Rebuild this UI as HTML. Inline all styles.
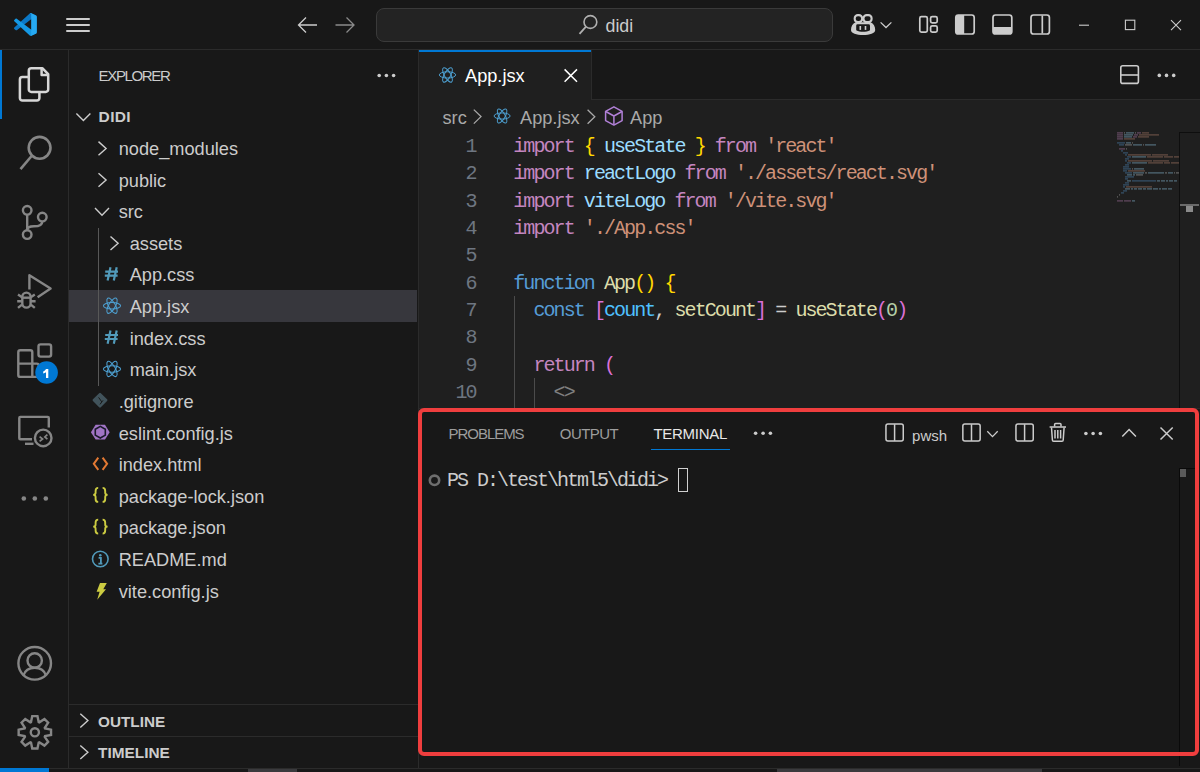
<!DOCTYPE html>
<html><head><meta charset="utf-8">
<style>
*{margin:0;padding:0;box-sizing:border-box}
html,body{width:1200px;height:772px;overflow:hidden;background:#181818}
body{position:relative;font-family:"Liberation Sans",sans-serif;color:#cccccc}
.a{position:absolute}
.t{position:absolute;white-space:pre;line-height:1}
.m{font-family:"Liberation Mono",monospace;-webkit-text-stroke:0}
svg{position:absolute;overflow:visible}
</style></head><body>

<div class="a" style="left:0;top:0;width:1200px;height:49px;background:#181818"></div>
<div class="a" style="left:0;top:49px;width:1200px;height:1px;background:#2b2b2b"></div>
<div class="a" style="left:68px;top:50px;width:1px;height:718px;background:#2b2b2b"></div>
<div class="a" style="left:0;top:50px;width:2px;height:69px;background:#0078d4"></div>
<div class="a" style="left:418px;top:50px;width:1px;height:718px;background:#2b2b2b"></div>
<div class="a" style="left:419px;top:100px;width:781px;height:308px;background:#1f1f1f"></div>
<div class="a" style="left:591px;top:99px;width:609px;height:1px;background:#2b2b2b"></div>
<div class="a" style="left:419px;top:50px;width:172px;height:50px;background:#1f1f1f"></div>
<div class="a" style="left:419px;top:50px;width:172px;height:2px;background:#0078d4"></div>
<div class="a" style="left:591px;top:50px;width:1px;height:49px;background:#2b2b2b"></div>
<svg style="left:13.9px;top:13px" width="22.9" height="22.9" viewBox="0 0 100 100">
<path fill="#0b78c6" d="M96.4614 10.7962L75.8569 0.875542C73.4719 -0.272773 70.6217 0.211611 68.75 2.08333L1.29858 63.5832C-0.515693 65.2373 -0.513607 68.0937 1.30308 69.7452L6.81272 74.754C8.29793 76.1042 10.5347 76.2036 12.1338 74.9905L93.3609 13.3699C96.086 11.3026 100 13.2462 100 16.6667V16.4275C100 14.0265 98.6246 11.8378 96.4614 10.7962Z"/>
<path fill="#1598e4" d="M96.4614 89.2038L75.8569 99.1245C73.4719 100.273 70.6217 99.7884 68.75 97.9167L1.29858 36.4169C-0.515693 34.7627 -0.513607 31.9063 1.30308 30.2548L6.81272 25.246C8.29793 23.8958 10.5347 23.7964 12.1338 25.0095L93.3609 86.6301C96.086 88.6974 100 86.7538 100 83.3334V83.5726C100 85.9735 98.6246 88.1622 96.4614 89.2038Z"/>
<path fill="#26a9f2" d="M75.8578 99.1263C73.4721 100.274 70.6219 99.7885 68.75 97.9166C71.0564 100.223 75 98.5895 75 95.3278V4.67213C75 1.41039 71.0564 -0.223106 68.75 2.08329C70.6219 0.211402 73.4721 -0.273666 75.8578 0.873633L96.4587 10.7807C98.6234 11.8217 100 14.0112 100 16.4132V83.5871C100 85.9893 98.6234 88.1788 96.4586 89.2198L75.8578 99.1263Z"/>
</svg>
<div class="a" style="left:66px;top:18.4px;width:24px;height:2px;background:#cccccc;border-radius:1px"></div>
<div class="a" style="left:66px;top:24.2px;width:24px;height:2px;background:#cccccc;border-radius:1px"></div>
<div class="a" style="left:66px;top:30.0px;width:24px;height:2px;background:#cccccc;border-radius:1px"></div>
<svg style="left:0;top:0" width="1" height="1"><path d="M298.5 25 H317 M306 17.5 L298.5 25 L306 32.5" fill="none" stroke="#cccccc" stroke-width="1.3"/><path d="M335.5 25 H354 M346.5 17.5 L354 25 L346.5 32.5" fill="none" stroke="#8a8a8a" stroke-width="1.3"/></svg>
<div class="a" style="left:375.5px;top:8px;width:457px;height:34px;background:#232323;border:1px solid #3a3a3a;border-radius:8px"></div>
<svg style="left:0;top:0" width="1" height="1"><circle cx="590.4" cy="22" r="6.4" fill="none" stroke="#b0b0b0" stroke-width="1.6"/><path d="M586 26.6 L579.5 33.8" stroke="#b0b0b0" stroke-width="1.8" fill="none"/></svg>
<div class="t" style="left:605.50px;top:17.73px;font-size:17.8px;color:#cccccc;">didi</div>
<svg style="left:0;top:0" width="1" height="1">
<g fill="none" stroke="#cccccc" stroke-width="2.1"><rect x="854.7" y="15.1" width="7.4" height="7" rx="3.2"/><rect x="863.5" y="15.1" width="8.1" height="7" rx="3.2"/></g>
<path fill-rule="evenodd" fill="#cccccc" d="M851 30 C851 26.5 852.6 23.4 855.6 22.3 H870.6 C873.6 23.4 875.2 26.5 875.2 30 C875.2 33.2 869.8 35 863.1 35 C856.4 35 851 33.2 851 30 Z M857.6 24.3 H868.6 a1.4 1.4 0 0 1 1.4 1.4 V30.2 C868 31.4 865.6 31.8 863.1 31.8 C860.6 31.8 858.2 31.4 856.2 30.2 V25.7 a1.4 1.4 0 0 1 1.4 -1.4 Z"/>
<rect x="859.5" y="26" width="1.6" height="3.9" fill="#cccccc"/><rect x="864.7" y="26" width="1.6" height="3.9" fill="#cccccc"/>
<path d="M880.6 22.4 L886 27.5 L891.4 22.4" fill="none" stroke="#cccccc" stroke-width="1.3"/></svg>
<svg style="left:0;top:0" width="1" height="1"><g fill="none" stroke="#cccccc" stroke-width="1.7">
<rect x="919.8" y="16.7" width="7.5" height="15.4" rx="1.6"/>
<rect x="930.6" y="16.7" width="6.6" height="6.2" rx="1.6"/>
<rect x="930.6" y="25.9" width="6.6" height="6.2" rx="1.6"/>
<rect x="955.8" y="15" width="18.4" height="19" rx="2.5"/>
<rect x="993" y="15" width="18.8" height="19" rx="2.5"/>
<rect x="1031" y="15" width="18.4" height="19" rx="2.5"/>
<path d="M1042.3 15.5 V33.5"/>
</g><g fill="#cccccc"><path d="M955.8 17.5 a2.5 2.5 0 0 1 2.5 -2.5 H964.2 V34 H958.3 a2.5 2.5 0 0 1 -2.5 -2.5 Z"/>
<path d="M993 27 H1011.8 V31.5 a2.5 2.5 0 0 1 -2.5 2.5 H995.5 a2.5 2.5 0 0 1 -2.5 -2.5 Z"/></g>
<path d="M1079 25.2 H1089" stroke="#cccccc" stroke-width="1.1"/>
<rect x="1125.4" y="20.2" width="9.4" height="9.4" fill="none" stroke="#cccccc" stroke-width="1.1"/>
<path d="M1171 20.1 L1181 30.1 M1181 20.1 L1171 30.1" stroke="#cccccc" stroke-width="1.1"/>
</svg>
<svg style="left:0;top:0" width="1" height="1">
<g fill="none" stroke="#d7d7d7" stroke-width="2.5" stroke-linejoin="round">
<path d="M28.8 76.9 H22.4 a2.5 2.5 0 0 0 -2.5 2.5 V98.1 a2.5 2.5 0 0 0 2.5 2.5 H36.9 a2.5 2.5 0 0 0 2.5 -2.5 V91.9"/>
<path d="M31.3 68.2 H42.3 L48.2 74.1 V89.4 a2.5 2.5 0 0 1 -2.5 2.5 H31.3 a2.5 2.5 0 0 1 -2.5 -2.5 V70.7 a2.5 2.5 0 0 1 2.5 -2.5 Z"/>
<path d="M41.6 68.5 V75 H48"/>
</g>
<g fill="none" stroke="#868686" stroke-width="2.6">
<circle cx="39.6" cy="147.8" r="10.9"/>
<path d="M31.6 156 L20.5 169.2"/>
</g>
<g fill="none" stroke="#868686" stroke-width="2.4">
<circle cx="27.2" cy="210.3" r="4.3"/>
<circle cx="27.2" cy="234.6" r="4.3"/>
<circle cx="42.3" cy="217.1" r="4.3"/>
<path d="M27.2 214.6 V230.3"/>
<path d="M42.3 221.4 C42.3 225.5 38 226.2 34 226.2 C30 226.2 27.2 227 27.2 230"/>
</g>
<g fill="none" stroke="#868686" stroke-width="2.4" stroke-linejoin="round">
<path d="M29.4 289.5 V275.2 L50.6 288.6 L37.6 297.2"/>
<rect x="22.3" y="292.6" width="8.3" height="15" rx="4.15"/>
<path d="M22.3 297.7 H30.6"/>
<path d="M18 294.6 L22 297.3 M34.8 294.6 L30.8 297.3 M17.2 301.2 H22 M35.6 301.2 H30.8 M18 307.9 L22 304.6 M34.8 307.9 L30.8 304.6"/>
</g>
<g fill="none" stroke="#868686" stroke-width="2.4" stroke-linejoin="round">
<path d="M20.3 350.3 H30.3 a2 2 0 0 1 2 2 V363.6 H36.8 a2 2 0 0 1 2 2 V376.9 H20.3 a2 2 0 0 1 -2 -2 V352.3 a2 2 0 0 1 2 -2 Z M18.3 363.6 H32.3 V376.9"/>
<rect x="38.5" y="344.4" width="12.6" height="12.2" rx="2"/>
</g>
<circle cx="46.6" cy="372.5" r="11.3" fill="#0078d4"/>
<g fill="none" stroke="#868686" stroke-width="2.4">
<path d="M32 439.3 H20.3 a1 1 0 0 1 -1 -1 V417.9 a1 1 0 0 1 1 -1 H47.8 a1 1 0 0 1 1 1 V427.5"/>
<path d="M25 443.8 H33.5"/>
<circle cx="43.2" cy="437.9" r="8.3"/>
<path d="M39.6 436.6 L42.6 439 L39.6 441.4 M47.4 434.6 L44.8 436.9 L47.4 439.2" stroke-width="1.7"/>
</g>
<g fill="#868686"><circle cx="23.8" cy="498.5" r="2.3"/><circle cx="34.8" cy="498.5" r="2.3"/><circle cx="45.8" cy="498.5" r="2.3"/></g>
<g fill="none" stroke="#868686" stroke-width="2.4">
<circle cx="34.7" cy="663.3" r="16.3"/>
<circle cx="34.7" cy="660.5" r="7.2"/>
<path d="M23.5 675.5 C25 670.5 29 667.8 34.7 667.8 C40.4 667.8 44.4 670.5 45.9 675.5"/>
</g>
</svg>
<svg style="left:0;top:0" width="1" height="1"><path d="M46 369.1 H48.3 V378 H46 V372.3 C45.2 372.9 44.3 373.3 43.2 373.5 V371.6 C44.5 371.2 45.4 370.3 46 369.1 Z" fill="#ffffff"/></svg>
<svg style="left:0;top:0" width="1" height="1"><polygon points="31.01,722.10 32.24,716.11 37.46,716.11 38.69,722.10 39.35,722.37 44.45,719.00 48.15,722.70 44.78,727.80 45.05,728.46 51.04,729.69 51.04,734.91 45.05,736.14 44.78,736.80 48.15,741.90 44.45,745.60 39.35,742.23 38.69,742.50 37.46,748.49 32.24,748.49 31.01,742.50 30.35,742.23 25.25,745.60 21.55,741.90 24.92,736.80 24.65,736.14 18.66,734.91 18.66,729.69 24.65,728.46 24.92,727.80 21.55,722.70 25.25,719.00 30.35,722.37" fill="none" stroke="#868686" stroke-width="2.4" stroke-linejoin="miter"/><circle cx="34.85" cy="732.3" r="4.1" fill="none" stroke="#868686" stroke-width="2.4"/></svg>
<div class="t" style="left:98.60px;top:68.30px;font-size:15px;color:#cccccc;letter-spacing:-1.35px;">EXPLORER</div>
<svg style="left:0;top:0" width="1" height="1"><g fill="#cccccc"><circle cx="379.2" cy="75.5" r="1.8"/><circle cx="386.4" cy="75.5" r="1.8"/><circle cx="393.6" cy="75.5" r="1.8"/></g></svg>
<div class="a" style="left:69px;top:290px;width:348px;height:32px;background:#37373d"></div>
<div class="a" style="left:98px;top:227.5px;width:1px;height:158.1px;background:#585858"></div>
<div class="t" style="left:98.60px;top:109.28px;font-size:15.5px;color:#cccccc;font-weight:bold;letter-spacing:0.35px;">DIDI</div>
<div class="t" style="left:118.70px;top:140.01px;font-size:18.2px;color:#cccccc;">node_modules</div>
<div class="t" style="left:118.70px;top:171.63px;font-size:18.2px;color:#cccccc;">public</div>
<div class="t" style="left:118.70px;top:203.25px;font-size:18.2px;color:#cccccc;">src</div>
<div class="t" style="left:129.70px;top:234.87px;font-size:18.2px;color:#cccccc;">assets</div>
<div class="t" style="left:129.70px;top:266.49px;font-size:18.2px;color:#cccccc;">App.css</div>
<div class="t" style="left:129.70px;top:298.11px;font-size:18.2px;color:#cccccc;">App.jsx</div>
<div class="t" style="left:129.70px;top:329.73px;font-size:18.2px;color:#cccccc;">index.css</div>
<div class="t" style="left:129.70px;top:361.35px;font-size:18.2px;color:#cccccc;">main.jsx</div>
<div class="t" style="left:118.70px;top:392.97px;font-size:18.2px;color:#cccccc;">.gitignore</div>
<div class="t" style="left:118.70px;top:424.59px;font-size:18.2px;color:#cccccc;">eslint.config.js</div>
<div class="t" style="left:118.70px;top:456.21px;font-size:18.2px;color:#cccccc;">index.html</div>
<div class="t" style="left:118.70px;top:487.83px;font-size:18.2px;color:#cccccc;">package-lock.json</div>
<div class="t" style="left:118.70px;top:519.45px;font-size:18.2px;color:#cccccc;">package.json</div>
<div class="t" style="left:118.70px;top:551.07px;font-size:18.2px;color:#cccccc;">README.md</div>
<div class="t" style="left:118.70px;top:582.69px;font-size:18.2px;color:#cccccc;">vite.config.js</div>
<svg style="left:0;top:0" width="1" height="1"><path d="M76.4 113.6 L83.4 120.6 L90.4 113.6" fill="none" stroke="#cccccc" stroke-width="1.4"/><path d="M98.5 141.63 L106.1 148.43 L98.5 155.23000000000002" fill="none" stroke="#cccccc" stroke-width="1.4"/><path d="M98.5 173.25 L106.1 180.05 L98.5 186.85000000000002" fill="none" stroke="#cccccc" stroke-width="1.4"/><path d="M95 208.07000000000002 L102 215.27 L109 208.07000000000002" fill="none" stroke="#cccccc" stroke-width="1.4"/><path d="M110.5 236.49 L118.1 243.29000000000002 L110.5 250.09000000000003" fill="none" stroke="#cccccc" stroke-width="1.4"/><path d="M110.5 267.3 L107.6 280.4 M116.7 267.3 L113.8 280.4 M105.2 271.7 H118 M104.8 275.7 H117.6" fill="none" stroke="#519aba" stroke-width="2.2"/><g fill="none" stroke="#4d9fd0" stroke-width="1.05" transform="translate(112 305.73)"><ellipse rx="8.60" ry="3.30" transform="rotate(0)"/><ellipse rx="8.60" ry="3.30" transform="rotate(60)"/><ellipse rx="8.60" ry="3.30" transform="rotate(120)"/></g><path d="M110.5 330.6 L107.6 343.7 M116.7 330.6 L113.8 343.7 M105.2 335.0 H118 M104.8 339.0 H117.6" fill="none" stroke="#519aba" stroke-width="2.2"/><g fill="none" stroke="#4d9fd0" stroke-width="1.05" transform="translate(112 368.97)"><ellipse rx="8.60" ry="3.30" transform="rotate(0)"/><ellipse rx="8.60" ry="3.30" transform="rotate(60)"/><ellipse rx="8.60" ry="3.30" transform="rotate(120)"/></g><g transform="translate(100 400.2) rotate(45)"><rect x="-5.6" y="-5.6" width="11.2" height="11.2" rx="1.2" fill="#41535b"/></g><path d="M98.6 397.4 L101.8 401.9 L100 404.4 M101.8 401.9 L103 400.4" stroke="#181818" stroke-width="1" fill="none"/><polygon points="109.70,432.21 105.00,439.57 95.60,439.57 90.90,432.21 95.60,424.85 105.00,424.85" fill="#a074c4"/><polygon points="105.32,435.11 100.30,438.01 95.28,435.11 95.28,429.31 100.30,426.41 105.32,429.31" fill="#a074c4" stroke="#1a1a2a" stroke-width="1.6"/><path d="M98.3 457.7 L93.8 463.8 L98.3 469.9 M102.6 457.7 L107.1 463.8 L102.6 469.9" fill="none" stroke="#e37933" stroke-width="2"/><path d="M98.2 487.9 C96 487.9 95.6 488.9 95.6 490.9 V492.8 C95.6 494.1 94.8 494.9 93.2 494.9 C94.8 494.9 95.6 495.8 95.6 497.1 V498.9 C95.6 500.9 96 501.9 98.2 501.9 M102.6 487.9 C104.8 487.9 105.2 488.9 105.2 490.9 V492.8 C105.2 494.1 106 494.9 107.6 494.9 C106 494.9 105.2 495.8 105.2 497.1 V498.9 C105.2 500.9 104.8 501.9 102.6 501.9" fill="none" stroke="#cbcb41" stroke-width="1.9"/><path d="M98.2 519.6 C96 519.6 95.6 520.6 95.6 522.6 V524.4 C95.6 525.8 94.8 526.6 93.2 526.6 C94.8 526.6 95.6 527.4 95.6 528.8 V530.6 C95.6 532.6 96 533.6 98.2 533.6 M102.6 519.6 C104.8 519.6 105.2 520.6 105.2 522.6 V524.4 C105.2 525.8 106 526.6 107.6 526.6 C106 526.6 105.2 527.4 105.2 528.8 V530.6 C105.2 532.6 104.8 533.6 102.6 533.6" fill="none" stroke="#cbcb41" stroke-width="1.9"/><circle cx="100.3" cy="559.0" r="7.8" fill="none" stroke="#519aba" stroke-width="1.6"/><circle cx="100.3" cy="555.2" r="1.3" fill="#519aba"/><path d="M98.6 557.9 H100.9 V563.3 M98.4 563.6 H102.4" stroke="#519aba" stroke-width="1.8" fill="none"/><path d="M100 582.9 L106.8 582.9 L103.3 589.3 L106 589.3 L97.2 599.8 L99.6 591.7 L96.6 591.7 Z" fill="#cbcb41"/></svg>
<div class="a" style="left:69px;top:704px;width:349px;height:1px;background:#2b2b2b"></div>
<div class="a" style="left:69px;top:736px;width:349px;height:1px;background:#2b2b2b"></div>
<div class="a" style="left:0;top:768px;width:1200px;height:1px;background:#2b2b2b"></div>
<svg style="left:0;top:0" width="1" height="1"><path d="M80.3 713.8000000000001 L87.89999999999999 720.6 L80.3 727.4" fill="none" stroke="#cccccc" stroke-width="1.4"/><path d="M80.3 745.5 L87.89999999999999 752.3 L80.3 759.0999999999999" fill="none" stroke="#cccccc" stroke-width="1.4"/></svg>
<div class="t" style="left:98.00px;top:714.05px;font-size:15.3px;color:#cccccc;font-weight:bold;">OUTLINE</div>
<div class="t" style="left:98.00px;top:744.86px;font-size:15.4px;color:#cccccc;font-weight:bold;">TIMELINE</div>
<div class="a" style="left:0;top:769px;width:1200px;height:3px;background:#181818"></div>
<div class="a" style="left:0;top:768px;width:49px;height:4px;background:#0078d4"></div>
<div class="a" style="left:248px;top:769px;width:49px;height:3px;background:#3a3a3d"></div>
<div class="a" style="left:777px;top:769px;width:265px;height:3px;background:#3a3a3d"></div>
<div class="t" style="left:465.00px;top:67.19px;font-size:18.2px;color:#ffffff;">App.jsx</div>
<div class="t" style="left:442.50px;top:108.89px;font-size:18.2px;color:#a9a9a9;">src</div>
<div class="t" style="left:520.00px;top:109.09px;font-size:18.2px;color:#a9a9a9;">App.jsx</div>
<div class="t" style="left:630.00px;top:109.14px;font-size:18.2px;color:#a9a9a9;">App</div>
<svg style="left:0;top:0" width="1" height="1"><g fill="none" stroke="#4d9fd0" stroke-width="1.00" transform="translate(447.5 74.9)"><ellipse rx="8.17" ry="3.13" transform="rotate(0)"/><ellipse rx="8.17" ry="3.13" transform="rotate(60)"/><ellipse rx="8.17" ry="3.13" transform="rotate(120)"/></g><path d="M564.6 69.4 L577 81.8 M577 69.4 L564.6 81.8" stroke="#ffffff" stroke-width="1.5"/><path d="M473.8 109.6 L481 116.6 L473.8 123.6" fill="none" stroke="#a9a9a9" stroke-width="1.3"/><g fill="none" stroke="#4d9fd0" stroke-width="0.98" transform="translate(502.1 116)"><ellipse rx="8.00" ry="3.07" transform="rotate(0)"/><ellipse rx="8.00" ry="3.07" transform="rotate(60)"/><ellipse rx="8.00" ry="3.07" transform="rotate(120)"/></g><path d="M587.6 109.8 L594.8 116.8 L587.6 123.8" fill="none" stroke="#a9a9a9" stroke-width="1.3"/><g fill="none" stroke="#b180d7" stroke-width="1.5" stroke-linejoin="round"><path d="M613.9 106.8 L622.1 111.4 V120.6 L613.9 125.1 L605.6 120.6 V111.4 Z"/><path d="M605.8 111.5 L613.9 116 L622 111.5 M613.9 116 V124.8"/></g><g fill="none" stroke="#cccccc" stroke-width="1.6"><rect x="1120.8" y="65.8" width="17.6" height="17.6" rx="2"/><path d="M1121 75 H1138.2"/></g><g fill="#cccccc"><circle cx="1159.3" cy="75.4" r="1.8"/><circle cx="1166.5" cy="75.4" r="1.8"/><circle cx="1173.7" cy="75.4" r="1.8"/></g></svg>
<div class="t m" style="left:465.57px;top:136.98px;font-size:20px;letter-spacing:-1.93px;color:#6e7681">1</div>
<div class="t m" style="left:513.30px;top:136.98px;font-size:20px;letter-spacing:-1.93px;color:#cccccc"><span style="color:#c586c0">import</span><span style="color:#cccccc"> </span><span style="color:#ffd700">{</span><span style="color:#9cdcfe"> useState </span><span style="color:#ffd700">}</span><span style="color:#cccccc"> </span><span style="color:#c586c0">from</span><span style="color:#ce9178"> &#x27;react&#x27;</span></div>
<div class="t m" style="left:465.57px;top:164.31px;font-size:20px;letter-spacing:-1.93px;color:#6e7681">2</div>
<div class="t m" style="left:513.30px;top:164.31px;font-size:20px;letter-spacing:-1.93px;color:#cccccc"><span style="color:#c586c0">import</span><span style="color:#9cdcfe"> reactLogo </span><span style="color:#c586c0">from</span><span style="color:#ce9178"> &#x27;./assets/react.svg&#x27;</span></div>
<div class="t m" style="left:465.57px;top:191.64px;font-size:20px;letter-spacing:-1.93px;color:#6e7681">3</div>
<div class="t m" style="left:513.30px;top:191.64px;font-size:20px;letter-spacing:-1.93px;color:#cccccc"><span style="color:#c586c0">import</span><span style="color:#9cdcfe"> viteLogo </span><span style="color:#c586c0">from</span><span style="color:#ce9178"> &#x27;/vite.svg&#x27;</span></div>
<div class="t m" style="left:465.57px;top:218.97px;font-size:20px;letter-spacing:-1.93px;color:#6e7681">4</div>
<div class="t m" style="left:513.30px;top:218.97px;font-size:20px;letter-spacing:-1.93px;color:#cccccc"><span style="color:#c586c0">import</span><span style="color:#ce9178"> &#x27;./App.css&#x27;</span></div>
<div class="t m" style="left:465.57px;top:246.30px;font-size:20px;letter-spacing:-1.93px;color:#6e7681">5</div>
<div class="t m" style="left:465.57px;top:273.62px;font-size:20px;letter-spacing:-1.93px;color:#6e7681">6</div>
<div class="t m" style="left:513.30px;top:273.62px;font-size:20px;letter-spacing:-1.93px;color:#cccccc"><span style="color:#569cd6">function</span><span style="color:#cccccc"> </span><span style="color:#dcdcaa">App</span><span style="color:#ffd700">()</span><span style="color:#cccccc"> </span><span style="color:#ffd700">{</span></div>
<div class="t m" style="left:465.57px;top:300.95px;font-size:20px;letter-spacing:-1.93px;color:#6e7681">7</div>
<div class="t m" style="left:513.30px;top:300.95px;font-size:20px;letter-spacing:-1.93px;color:#cccccc"><span style="color:#cccccc">  </span><span style="color:#569cd6">const</span><span style="color:#cccccc"> </span><span style="color:#da70d6">[</span><span style="color:#4fc1ff">count</span><span style="color:#cccccc">, </span><span style="color:#dcdcaa">setCount</span><span style="color:#da70d6">]</span><span style="color:#cccccc"> = </span><span style="color:#dcdcaa">useState</span><span style="color:#da70d6">(</span><span style="color:#b5cea8">0</span><span style="color:#da70d6">)</span></div>
<div class="t m" style="left:465.57px;top:328.29px;font-size:20px;letter-spacing:-1.93px;color:#6e7681">8</div>
<div class="t m" style="left:465.57px;top:355.62px;font-size:20px;letter-spacing:-1.93px;color:#6e7681">9</div>
<div class="t m" style="left:513.30px;top:355.62px;font-size:20px;letter-spacing:-1.93px;color:#cccccc"><span style="color:#cccccc">  </span><span style="color:#c586c0">return</span><span style="color:#cccccc"> </span><span style="color:#da70d6">(</span></div>
<div class="t m" style="left:455.50px;top:382.94px;font-size:20px;letter-spacing:-1.93px;color:#6e7681">10</div>
<div class="t m" style="left:513.30px;top:382.94px;font-size:20px;letter-spacing:-1.93px;color:#cccccc"><span style="color:#cccccc">    </span><span style="color:#808080">&lt;&gt;</span></div>
<div class="a" style="left:514px;top:296.3px;width:1px;height:112px;background:#4b4b4b"></div>
<div class="a" style="left:534px;top:378.3px;width:1px;height:30px;background:#4b4b4b"></div>
<svg style="left:0;top:0" width="1" height="1"><g opacity="0.42"><rect x="1117.0" y="132.3" width="6.0" height="1.2" fill="#c586c0"/><rect x="1124.0" y="132.3" width="1.0" height="1.2" fill="#cccccc"/><rect x="1126.0" y="132.3" width="8.0" height="1.2" fill="#9cdcfe"/><rect x="1135.0" y="132.3" width="1.0" height="1.2" fill="#cccccc"/><rect x="1137.0" y="132.3" width="4.0" height="1.2" fill="#c586c0"/><rect x="1142.0" y="132.3" width="7.0" height="1.2" fill="#ce9178"/><rect x="1117.0" y="134.3" width="6.0" height="1.2" fill="#c586c0"/><rect x="1124.0" y="134.3" width="9.0" height="1.2" fill="#9cdcfe"/><rect x="1134.0" y="134.3" width="4.0" height="1.2" fill="#c586c0"/><rect x="1139.0" y="134.3" width="20.0" height="1.2" fill="#ce9178"/><rect x="1117.0" y="136.3" width="6.0" height="1.2" fill="#c586c0"/><rect x="1124.0" y="136.3" width="8.0" height="1.2" fill="#9cdcfe"/><rect x="1133.0" y="136.3" width="4.0" height="1.2" fill="#c586c0"/><rect x="1138.0" y="136.3" width="11.0" height="1.2" fill="#ce9178"/><rect x="1117.0" y="138.3" width="6.0" height="1.2" fill="#c586c0"/><rect x="1124.0" y="138.3" width="11.0" height="1.2" fill="#ce9178"/><rect x="1117.0" y="142.3" width="8.0" height="1.2" fill="#569cd6"/><rect x="1126.0" y="142.3" width="5.0" height="1.2" fill="#9cdcfe"/><rect x="1132.0" y="142.3" width="1.0" height="1.2" fill="#cccccc"/><rect x="1119.0" y="144.3" width="5.0" height="1.2" fill="#569cd6"/><rect x="1125.0" y="144.3" width="7.0" height="1.2" fill="#cccccc"/><rect x="1133.0" y="144.3" width="9.0" height="1.2" fill="#9cdcfe"/><rect x="1143.0" y="144.3" width="1.0" height="1.2" fill="#cccccc"/><rect x="1145.0" y="144.3" width="11.0" height="1.2" fill="#9cdcfe"/><rect x="1119.0" y="148.3" width="6.0" height="1.2" fill="#c586c0"/><rect x="1126.0" y="148.3" width="1.0" height="1.2" fill="#cccccc"/><rect x="1121.0" y="150.3" width="2.0" height="1.2" fill="#569cd6"/><rect x="1123.0" y="152.3" width="5.0" height="1.2" fill="#569cd6"/><rect x="1125.0" y="154.3" width="2.0" height="1.2" fill="#569cd6"/><rect x="1128.0" y="154.3" width="23.0" height="1.2" fill="#ce9178"/><rect x="1152.0" y="154.3" width="16.0" height="1.2" fill="#ce9178"/><rect x="1127.0" y="156.3" width="4.0" height="1.2" fill="#569cd6"/><rect x="1132.0" y="156.3" width="14.0" height="1.2" fill="#9cdcfe"/><rect x="1147.0" y="156.3" width="16.0" height="1.2" fill="#ce9178"/><rect x="1164.0" y="156.3" width="9.0" height="1.2" fill="#ce9178"/><rect x="1174.0" y="156.3" width="5.0" height="1.2" fill="#ce9178"/><rect x="1125.0" y="158.3" width="4.0" height="1.2" fill="#569cd6"/><rect x="1125.0" y="160.3" width="2.0" height="1.2" fill="#569cd6"/><rect x="1128.0" y="160.3" width="24.0" height="1.2" fill="#ce9178"/><rect x="1153.0" y="160.3" width="16.0" height="1.2" fill="#ce9178"/><rect x="1127.0" y="162.3" width="4.0" height="1.2" fill="#569cd6"/><rect x="1132.0" y="162.3" width="15.0" height="1.2" fill="#9cdcfe"/><rect x="1148.0" y="162.3" width="15.0" height="1.2" fill="#ce9178"/><rect x="1164.0" y="162.3" width="6.0" height="1.2" fill="#ce9178"/><rect x="1171.0" y="162.3" width="8.0" height="1.2" fill="#ce9178"/><rect x="1125.0" y="164.3" width="4.0" height="1.2" fill="#569cd6"/><rect x="1123.0" y="166.3" width="6.0" height="1.2" fill="#569cd6"/><rect x="1123.0" y="168.3" width="8.0" height="1.2" fill="#569cd6"/><rect x="1132.0" y="168.3" width="1.0" height="1.2" fill="#cccccc"/><rect x="1134.0" y="168.3" width="10.0" height="1.2" fill="#9cdcfe"/><rect x="1123.0" y="170.3" width="4.0" height="1.2" fill="#569cd6"/><rect x="1128.0" y="170.3" width="17.0" height="1.2" fill="#ce9178"/><rect x="1125.0" y="172.3" width="7.0" height="1.2" fill="#569cd6"/><rect x="1133.0" y="172.3" width="11.0" height="1.2" fill="#9cdcfe"/><rect x="1145.0" y="172.3" width="2.0" height="1.2" fill="#cccccc"/><rect x="1148.0" y="172.3" width="16.0" height="1.2" fill="#9cdcfe"/><rect x="1165.0" y="172.3" width="2.0" height="1.2" fill="#cccccc"/><rect x="1168.0" y="172.3" width="5.0" height="1.2" fill="#9cdcfe"/><rect x="1174.0" y="172.3" width="1.0" height="1.2" fill="#cccccc"/><rect x="1176.0" y="172.3" width="3.0" height="1.2" fill="#cccccc"/><rect x="1127.0" y="174.3" width="5.0" height="1.2" fill="#9cdcfe"/><rect x="1133.0" y="174.3" width="2.0" height="1.2" fill="#9cdcfe"/><rect x="1136.0" y="174.3" width="7.0" height="1.2" fill="#cccccc"/><rect x="1125.0" y="176.3" width="9.0" height="1.2" fill="#569cd6"/><rect x="1125.0" y="178.3" width="3.0" height="1.2" fill="#569cd6"/><rect x="1127.0" y="180.3" width="4.0" height="1.2" fill="#9cdcfe"/><rect x="1132.0" y="180.3" width="24.0" height="1.2" fill="#569cd6"/><rect x="1157.0" y="180.3" width="3.0" height="1.2" fill="#9cdcfe"/><rect x="1161.0" y="180.3" width="4.0" height="1.2" fill="#9cdcfe"/><rect x="1166.0" y="180.3" width="2.0" height="1.2" fill="#9cdcfe"/><rect x="1169.0" y="180.3" width="4.0" height="1.2" fill="#9cdcfe"/><rect x="1174.0" y="180.3" width="3.0" height="1.2" fill="#9cdcfe"/><rect x="1125.0" y="182.3" width="4.0" height="1.2" fill="#569cd6"/><rect x="1123.0" y="184.3" width="6.0" height="1.2" fill="#569cd6"/><rect x="1123.0" y="186.3" width="2.0" height="1.2" fill="#569cd6"/><rect x="1126.0" y="186.3" width="26.0" height="1.2" fill="#ce9178"/><rect x="1125.0" y="188.3" width="5.0" height="1.2" fill="#9cdcfe"/><rect x="1131.0" y="188.3" width="2.0" height="1.2" fill="#9cdcfe"/><rect x="1134.0" y="188.3" width="3.0" height="1.2" fill="#9cdcfe"/><rect x="1138.0" y="188.3" width="4.0" height="1.2" fill="#9cdcfe"/><rect x="1143.0" y="188.3" width="3.0" height="1.2" fill="#9cdcfe"/><rect x="1147.0" y="188.3" width="5.0" height="1.2" fill="#9cdcfe"/><rect x="1153.0" y="188.3" width="5.0" height="1.2" fill="#9cdcfe"/><rect x="1159.0" y="188.3" width="2.0" height="1.2" fill="#9cdcfe"/><rect x="1162.0" y="188.3" width="5.0" height="1.2" fill="#9cdcfe"/><rect x="1168.0" y="188.3" width="4.0" height="1.2" fill="#9cdcfe"/><rect x="1123.0" y="190.3" width="4.0" height="1.2" fill="#569cd6"/><rect x="1121.0" y="192.3" width="3.0" height="1.2" fill="#569cd6"/><rect x="1119.0" y="194.3" width="1.0" height="1.2" fill="#cccccc"/><rect x="1117.0" y="196.3" width="1.0" height="1.2" fill="#cccccc"/><rect x="1117.0" y="200.3" width="6.0" height="1.2" fill="#c586c0"/><rect x="1124.0" y="200.3" width="7.0" height="1.2" fill="#c586c0"/><rect x="1132.0" y="200.3" width="3.0" height="1.2" fill="#9cdcfe"/></g></svg>
<div class="a" style="left:1179px;top:132px;width:1px;height:276px;background:#0e0e0e"></div>
<div class="a" style="left:1180px;top:132px;width:20px;height:1px;background:#0e0e0e"></div>
<div class="a" style="left:1180px;top:204px;width:19px;height:2px;background:#6a6a6a"></div>
<div class="a" style="left:1186px;top:205.5px;width:7px;height:6.5px;background:#8a8a8a"></div>
<div class="a" style="left:419px;top:408px;width:781px;height:360px;background:#181818;border-top:1px solid #2b2b2b"></div>
<div class="t" style="left:448.60px;top:426.30px;font-size:15px;color:#9d9d9d;letter-spacing:-1.05px;">PROBLEMS</div>
<div class="t" style="left:559.80px;top:426.30px;font-size:15px;color:#9d9d9d;letter-spacing:-0.55px;">OUTPUT</div>
<div class="t" style="left:653.50px;top:426.30px;font-size:15px;color:#e7e7e7;letter-spacing:-0.3px;">TERMINAL</div>
<div class="a" style="left:651px;top:448.5px;width:79px;height:1.5px;background:#0078d4"></div>
<div class="t" style="left:912.10px;top:427.50px;font-size:15px;color:#cccccc;">pwsh</div>
<svg style="left:0;top:0" width="1" height="1"><g fill="#cccccc"><circle cx="755.6" cy="433.3" r="1.8"/><circle cx="763.1" cy="433.3" r="1.8"/><circle cx="770.4" cy="433.3" r="1.8"/></g><g fill="none" stroke="#cccccc" stroke-width="1.5"><rect x="885.95" y="424" width="17.3" height="17" rx="2"/><path d="M894.6 424.2 V440.8"/></g><g fill="none" stroke="#cccccc" stroke-width="1.5"><rect x="962.85" y="424" width="17.3" height="17" rx="2"/><path d="M971.5 424.2 V440.8"/></g><path d="M987.3 431.3 L992.5 436.6 L997.7 431.3" fill="none" stroke="#cccccc" stroke-width="1.3"/><g fill="none" stroke="#cccccc" stroke-width="1.5"><rect x="1015.95" y="424" width="17.3" height="17" rx="2"/><path d="M1024.6000000000001 424.2 V440.8"/></g><g fill="none" stroke="#cccccc" stroke-width="1.5"><path d="M1049.6 427 H1066"/><path d="M1054.6 426.5 V424.4 a1 1 0 0 1 1 -1 H1060 a1 1 0 0 1 1 1 V426.5"/><path d="M1051.5 427.5 L1052.4 440 a1.3 1.3 0 0 0 1.3 1.3 H1061.9 a1.3 1.3 0 0 0 1.3 -1.3 L1064.1 427.5"/><path d="M1055 430 V438.5 M1057.8 430 V438.5 M1060.6 430 V438.5"/></g><g fill="#cccccc"><circle cx="1085.9" cy="433.5" r="1.8"/><circle cx="1093.1" cy="433.5" r="1.8"/><circle cx="1100.4" cy="433.5" r="1.8"/></g><path d="M1122.3 436.6 L1129.1 429.6 L1135.9 436.6" fill="none" stroke="#cccccc" stroke-width="1.5"/><path d="M1160.5 427.5 L1172.7 439.5 M1172.7 427.5 L1160.5 439.5" stroke="#cccccc" stroke-width="1.5"/><circle cx="434.5" cy="480.3" r="4.7" fill="none" stroke="#6e6e6e" stroke-width="2.6"/><rect x="678.5" y="468.5" width="9" height="23" fill="none" stroke="#d0d0d0" stroke-width="1"/></svg>
<div class="t m" style="left:446.90px;top:471.18px;font-size:20px;letter-spacing:-2px;color:#cccccc">PS D:\test\html5\didi&gt;</div>
<div class="a" style="left:1179px;top:468px;width:1px;height:298px;background:#0a0a0a"></div>
<div class="a" style="left:1180px;top:468px;width:19px;height:1px;background:#0a0a0a"></div>
<div class="a" style="left:1180px;top:469px;width:6px;height:8px;background:#5a5a5a"></div>
<div class="a" style="left:418px;top:408px;width:781px;height:348px;border:4px solid #ef3e3e;border-radius:6px"></div>
</body></html>
